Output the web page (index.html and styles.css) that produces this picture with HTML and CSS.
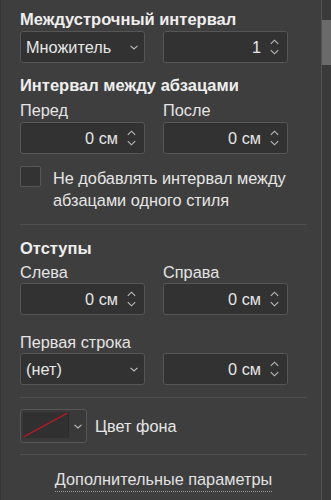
FILE: index.html
```html
<!DOCTYPE html>
<html lang="ru">
<head>
<meta charset="utf-8">
<link rel="stylesheet" href="styles.css">
</head>
<body>
<div class="frame">
  <main class="panel">
    <h3 class="heading first">Междустрочный интервал</h3>
    <div class="pair mt3">
      <div class="field select"><span class="val">Множитель</span><span class="caret"><svg width="8" height="5" viewBox="0 0 8 5"><path d="M0.5 0.8 L4 4 L7.5 0.8" fill="none" stroke="#bdbdbd" stroke-width="1.1"/></svg></span></div>
      <div class="field spin"><span class="num">1</span><span class="arrows"><svg width="9" height="16" viewBox="0 0 9 16"><path d="M0.8 4.8 L4.5 1.2 L8.2 4.8" fill="none" stroke="#bdbdbd" stroke-width="1.1"/><path d="M0.8 11.2 L4.5 14.8 L8.2 11.2" fill="none" stroke="#bdbdbd" stroke-width="1.1"/></svg></span></div>
    </div>

    <h3 class="heading sec">Интервал между абзацами</h3>
    <div class="pair labels">
      <span class="label">Перед</span>
      <span class="label">После</span>
    </div>
    <div class="pair mt3">
      <div class="field spin"><span class="num">0 см</span><span class="arrows"><svg width="9" height="16" viewBox="0 0 9 16"><path d="M0.8 4.8 L4.5 1.2 L8.2 4.8" fill="none" stroke="#bdbdbd" stroke-width="1.1"/><path d="M0.8 11.2 L4.5 14.8 L8.2 11.2" fill="none" stroke="#bdbdbd" stroke-width="1.1"/></svg></span></div>
      <div class="field spin"><span class="num">0 см</span><span class="arrows"><svg width="9" height="16" viewBox="0 0 9 16"><path d="M0.8 4.8 L4.5 1.2 L8.2 4.8" fill="none" stroke="#bdbdbd" stroke-width="1.1"/><path d="M0.8 11.2 L4.5 14.8 L8.2 11.2" fill="none" stroke="#bdbdbd" stroke-width="1.1"/></svg></span></div>
    </div>

    <label class="check">
      <span class="box"></span>
      <span class="check-text">Не добавлять интервал между абзацами одного стиля</span>
    </label>

    <hr class="divider d1">

    <h3 class="heading sec2">Отступы</h3>
    <div class="pair labels l2">
      <span class="label">Слева</span>
      <span class="label">Справа</span>
    </div>
    <div class="pair mt1">
      <div class="field spin"><span class="num">0 см</span><span class="arrows"><svg width="9" height="16" viewBox="0 0 9 16"><path d="M0.8 4.8 L4.5 1.2 L8.2 4.8" fill="none" stroke="#bdbdbd" stroke-width="1.1"/><path d="M0.8 11.2 L4.5 14.8 L8.2 11.2" fill="none" stroke="#bdbdbd" stroke-width="1.1"/></svg></span></div>
      <div class="field spin"><span class="num">0 см</span><span class="arrows"><svg width="9" height="16" viewBox="0 0 9 16"><path d="M0.8 4.8 L4.5 1.2 L8.2 4.8" fill="none" stroke="#bdbdbd" stroke-width="1.1"/><path d="M0.8 11.2 L4.5 14.8 L8.2 11.2" fill="none" stroke="#bdbdbd" stroke-width="1.1"/></svg></span></div>
    </div>
    <div class="label single">Первая строка</div>
    <div class="pair mt1">
      <div class="field select"><span class="val">(нет)</span><span class="caret"><svg width="8" height="5" viewBox="0 0 8 5"><path d="M0.5 0.8 L4 4 L7.5 0.8" fill="none" stroke="#bdbdbd" stroke-width="1.1"/></svg></span></div>
      <div class="field spin"><span class="num">0 см</span><span class="arrows"><svg width="9" height="16" viewBox="0 0 9 16"><path d="M0.8 4.8 L4.5 1.2 L8.2 4.8" fill="none" stroke="#bdbdbd" stroke-width="1.1"/><path d="M0.8 11.2 L4.5 14.8 L8.2 11.2" fill="none" stroke="#bdbdbd" stroke-width="1.1"/></svg></span></div>
    </div>

    <hr class="divider d2">

    <div class="color-row">
      <div class="color-btn">
        <span class="swatch"><svg width="45" height="26" viewBox="0 0 45 26"><line x1="0.5" y1="25" x2="44.5" y2="1" stroke="#d2141e" stroke-width="1.3"/></svg></span>
        <span class="color-caret"><svg width="8" height="5" viewBox="0 0 8 5"><path d="M0.5 0.8 L4 4 L7.5 0.8" fill="none" stroke="#bdbdbd" stroke-width="1.1"/></svg></span>
      </div>
      <span class="color-label">Цвет фона</span>
    </div>

    <hr class="divider d3">

    <div class="more"><a class="more-link">Дополнительные параметры</a></div>
  </main>
  <aside class="scrollbar"><div class="thumb"></div></aside>
</div>
</body>
</html>
```

FILE: styles.css
```css
html, body {
  margin: 0;
  padding: 0;
  background: #3e3e3e;
}
body {
  font-family: "Liberation Sans", Arial, sans-serif;
  color: #e6e6e6;
  font-size: 16.3px;
}
.frame {
  display: flex;
  width: 331px;
  height: 500px;
  overflow: hidden;
  border-left: 1px solid #343434;
  box-sizing: border-box;
}
.panel {
  flex: 1;
  padding: 10px 14px 0 19px;
}
.scrollbar {
  width: 9px;
  border-left: 1px solid #545454;
  background: #3a3a3a;
}
.thumb {
  margin-top: 20px;
  height: 45px;
  background: #6a6a6a;
}
.heading {
  margin: 0;
  font-size: 16.5px;
  font-weight: bold;
  line-height: 18px;
  color: #eeeeee;
}
.heading.sec { margin-top: 13px; }
.heading.sec2 { margin-top: 14px; }
.pair {
  display: grid;
  grid-template-columns: 125px 125px;
  column-gap: 18px;
}
.mt3 { margin-top: 3px; }
.mt1 { margin-top: 2px; }
.labels { margin-top: 7px; }
.labels.l2 { margin-top: 6px; }
.label {
  display: block;
  line-height: 18px;
  color: #e4e4e4;
}
.label.single { margin-top: 18px; }
.field {
  box-sizing: border-box;
  height: 32px;
  border: 1px solid #565656;
  border-radius: 3px;
  background: #323232;
  display: flex;
  align-items: center;
}
.select {
  padding: 0 0 0 5px;
}
.select .val { flex: 1; }
.caret {
  width: 20px;
  display: flex;
  justify-content: center;
}
.caret svg { display: block; margin-top: 1px; }
.spin { justify-content: flex-end; }
.num { margin-right: 9px; }
.arrows {
  width: 9px;
  margin-right: 8px;
  display: flex;
}
.arrows svg { display: block; }
.check {
  display: flex;
  align-items: flex-start;
  margin-top: 12px;
}
.box {
  box-sizing: border-box;
  flex: none;
  width: 21px;
  height: 21px;
  border: 1px solid #585858;
  border-radius: 2px;
  background: #333333;
  margin-right: 12px;
}
.check-text {
  line-height: 22px;
  margin-top: 1px;
}
.divider {
  border: 0;
  border-top: 1px solid #4e4e4e;
  margin: 0;
  width: 287px;
}
.d1 { margin-top: 13px; }
.d2 { margin-top: 12px; }
.d3 { margin-top: 11px; }
.color-row {
  display: flex;
  align-items: center;
  margin-top: 11px;
}
.color-btn {
  box-sizing: border-box;
  width: 67px;
  height: 34px;
  border: 1px solid #565656;
  border-radius: 3px;
  background: #393939;
  display: flex;
  padding: 2px 0 2px 2px;
}
.swatch {
  width: 45px;
  height: 26px;
  background: #303030;
  border-right: 1px solid #2c2c2c;
}
.swatch svg { display: block; }
.color-caret {
  flex: 1;
  display: flex;
  align-items: center;
  justify-content: center;
}
.color-caret svg { display: block; }
.color-label {
  margin-left: 8px;
}
.more {
  width: 287px;
  margin-top: 15px;
  text-align: center;
}
.more-link {
  color: #e2e2e2;
  padding-bottom: 3px;
  border-bottom: 1px dotted #9a9a9a;
}
```
